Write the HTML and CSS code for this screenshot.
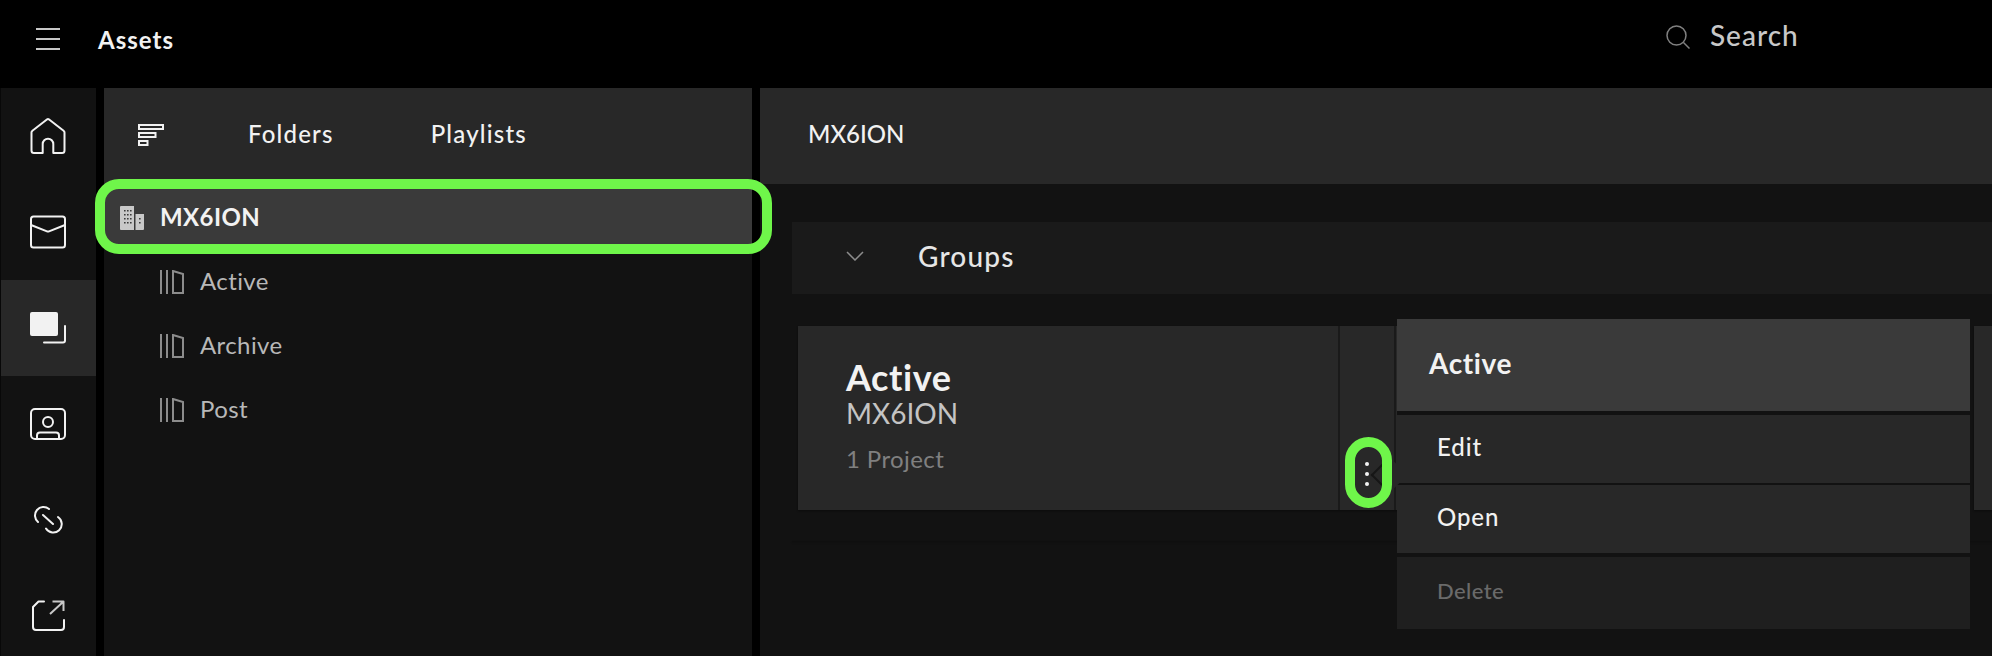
FILE: index.html
```html
<!DOCTYPE html>
<html lang="en">
<head>
    <meta charset="UTF-8">
    <title>Assets</title>
    <link rel="stylesheet" href="styles.css">
</head>
<body>
    <header class="topbar">
        <svg class="menu-icon" width="24" height="24" viewBox="0 0 24 24"><path d="M0 2h24M0 12h24M0 22h24"/></svg>
        <div class="topbar-title">Assets</div>
        <div class="search">
            <svg class="search-icon" width="24" height="24" viewBox="0 0 24 24"><circle cx="10.5" cy="10.5" r="9.5"/><path d="M17.5 17.5l6 6"/></svg>
            <span>Search</span>
        </div>
    </header>

    <div class="layout">
        <nav class="rail">
            <a class="rail-item">
                <svg viewBox="0 0 36 36"><path d="M4 35h8.700v-9a5.300 5.300 0 0 1 10.600 0v9H32a2.500 2.500 0 0 0 2.500-2.500V14.500a2 2 0 0 0-.9-1.700L18.800 1.300a1.500 1.500 0 0 0-1.600 0L2.400 12.800a2 2 0 0 0-.9 1.700v18A2.500 2.500 0 0 0 4 35z"/></svg>
            </a>
            <a class="rail-item">
                <svg viewBox="0 0 36 36"><rect x="1" y="2.500" width="34" height="31" rx="2.500"/><path d="M1 11l16 6.400q1 .4 2 0L35 11"/></svg>
            </a>
            <a class="rail-item active">
                <svg viewBox="0 0 36 36"><rect class="solid" x="0" y="2" width="28" height="24" rx="2"/><path d="M14 32.500h19a2 2 0 0 0 2-2V16"/></svg>
            </a>
            <a class="rail-item">
                <svg viewBox="0 0 36 36"><rect x="1" y="3" width="34" height="30" rx="4"/><circle cx="18" cy="16" r="5"/><path d="M7 33v-3.500a3 3 0 0 1 3-3h16a3 3 0 0 1 3 3V33"/></svg>
            </a>
            <a class="rail-item">
                <svg viewBox="0 0 36 36"><path d="M19 7A8.500 8.500 0 1 0 8 20M16 26.500A8.500 8.500 0 1 0 28 15M13 13l10 9"/></svg>
            </a>
            <a class="rail-item">
                <svg viewBox="0 0 36 36"><path d="M14 3.500H8.500L3 9v20a3 3 0 0 0 3 3h25a3 3 0 0 0 3-3v-7"/><path class="thin" d="M20 16L33 4M22.500 3.500H33.500V13"/></svg>
            </a>
        </nav>

        <aside class="sidebar">
            <div class="sidebar-tabs">
                <svg class="sort-icon" width="26" height="22" viewBox="0 0 26 22"><rect x="1" y="1" width="24" height="4"/><rect x="1" y="9" width="16.500" height="4"/><rect x="1" y="17" width="8.500" height="4"/></svg>
                <span class="tab">Folders</span>
                <span class="tab">Playlists</span>
            </div>
            <div class="tree-row root">
                <svg class="building-icon" width="24" height="24" viewBox="0 0 24 24">
                    <path class="fill" d="M1 0h13v24H1a1 1 0 0 1-1-1V1a1 1 0 0 1 1-1zM15.500 8H24v15a1 1 0 0 1-1 1h-7.500z"/>
                    <path class="holes" d="M4 4h1.600v1.600H4zM7 4h1.600v1.600H7zM10 4h1.600v1.600H10zM4 8h1.600v1.600H4zM7 8h1.600v1.600H7zM10 8h1.600v1.600H10zM4 12h1.600v1.600H4zM7 12h1.600v1.600H7zM10 12h1.600v1.600H10zM4 16h1.600v1.600H4zM7 16h1.600v1.600H7zM10 16h1.600v1.600H10zM19 12h1.600v1.600H19zM19 16h1.600v1.600H19z"/>
                </svg>
                <span>MX6ION</span>
                <div class="ring ring-row"></div>
            </div>
            <div class="tree-row">
                <svg class="folder-icon" width="24" height="24" viewBox="0 0 24 24"><path d="M1 0v24M7 0v24M13 1l10 3v19H13z"/></svg>
                <span>Active</span>
            </div>
            <div class="tree-row">
                <svg class="folder-icon" width="24" height="24" viewBox="0 0 24 24"><path d="M1 0v24M7 0v24M13 1l10 3v19H13z"/></svg>
                <span>Archive</span>
            </div>
            <div class="tree-row">
                <svg class="folder-icon" width="24" height="24" viewBox="0 0 24 24"><path d="M1 0v24M7 0v24M13 1l10 3v19H13z"/></svg>
                <span>Post</span>
            </div>
        </aside>

        <main class="main">
            <div class="main-header">MX6ION</div>
            <div class="main-body">
                <div class="group-bar">
                    <svg class="chevron" width="18" height="10" viewBox="0 0 18 10"><path d="M1 1l8 8 8-8"/></svg>
                    <span>Groups</span>
                </div>
                <div class="cards">
                    <div class="card">
                        <div class="card-info">
                            <div class="card-title">Active</div>
                            <div class="card-sub">MX6ION</div>
                            <div class="card-count">1 Project</div>
                        </div>
                        <div class="card-actions">
                            <div class="kebab"><i></i><i></i><i></i></div>
                            <div class="ring ring-kebab"></div>
                        </div>
                    </div>
                    <div class="card"></div>
                </div>
                <div class="cards-rule"></div>
            </div>
            <div class="context-menu">
                <div class="menu-title">Active</div>
                <div class="menu-item">Edit</div>
                <div class="menu-item">Open</div>
                <div class="menu-item disabled">Delete</div>
            </div>
        </main>
    </div>
</body>
</html>
```

FILE: styles.css
```css
/* Reset */
* {
    margin: 0;
    padding: 0;
    box-sizing: border-box;
}

body {
    background: #000;
    color: #f2f2f2;
    font-family: 'Lato', 'Liberation Sans', sans-serif;
    height: 656px;
    overflow: hidden;
}

svg {
    display: block;
    fill: none;
    flex-shrink: 0;
}

/* Top bar */
.topbar {
    height: 88px;
    display: flex;
    align-items: center;
    padding-left: 36px;
}

.menu-icon {
    stroke: #c8c8c8;
    stroke-width: 2;
    margin-top: -10px;
}

.topbar-title {
    margin: -10px 0 0 38px;
    font-size: 24px;
    font-weight: 700;
    letter-spacing: 1px;
}

.search {
    display: flex;
    align-items: center;
    gap: 20px;
    margin: -18px 0 0 1492px;
    font-size: 28px;
    font-weight: 500;
    letter-spacing: 1px;
    color: #c8c8c8;
}

.search-icon {
    stroke: #808080;
    stroke-width: 1.5;
    margin-top: 4px;
}

/* Page columns */
.layout {
    display: grid;
    grid-template-columns: 96px 648px 1fr;
    gap: 8px;
    height: 568px;
}

/* Icon rail */
.rail {
    background: #121212;
    border-left: 1px solid #080808;
    overflow: hidden;
}

.rail-item {
    height: 96px;
    display: flex;
    align-items: center;
    justify-content: center;
    padding-right: 1px;
}

.rail-item.active {
    background: #282828;
}

.rail-item svg {
    width: 36px;
    height: 36px;
    stroke: #f2f2f2;
    stroke-width: 2;
    stroke-linecap: round;
    stroke-linejoin: round;
}

.rail-item .solid {
    fill: #f2f2f2;
    stroke: none;
}

.rail-item .thin {
    stroke: #c8c8c8;
    stroke-linecap: butt;
}

/* Sidebar */
.sidebar {
    background: #121212;
}

.sidebar-tabs {
    height: 96px;
    background: #282828;
    display: flex;
    align-items: center;
    padding: 0 0 5px 34px;
    font-size: 24px;
    font-weight: 500;
    letter-spacing: 1.2px;
}

.sort-icon {
    stroke: #f2f2f2;
    stroke-width: 2;
    margin-top: 3px;
}

.tab {
    margin-left: 84px;
}

.tab + .tab {
    margin-left: 97px;
}

.tree-row {
    position: relative;
    height: 64px;
    display: flex;
    align-items: center;
    gap: 16px;
    padding-left: 56px;
    font-size: 24px;
    letter-spacing: .4px;
    color: #b8b8b8;
}

.tree-row.root {
    background: #3a3a3a;
    padding-left: 16px;
    font-weight: 700;
    color: #f2f2f2;
}

.folder-icon,
.building-icon {
    margin-top: 4px;
}

.folder-icon {
    stroke: #8c8c8c;
    stroke-width: 2;
}

.building-icon .fill {
    fill: #c8c8c8;
}

.building-icon .holes {
    fill: #3a3a3a;
}

/* Green callouts laid over the screenshot */
.ring {
    position: absolute;
    z-index: 2;
    border: 10px solid #6ff64a;
    pointer-events: none;
}

.ring-row {
    left: -9px;
    right: -20px;
    top: -5px;
    bottom: -6px;
    border-radius: 24px;
}

.ring-kebab {
    left: 5px;
    width: 47px;
    bottom: 2px;
    height: 71px;
    border-radius: 24px;
}

/* Main area */
.main {
    position: relative;
    background: #121212;
    overflow: hidden;
}

.main-header {
    height: 96px;
    background: #282828;
    display: flex;
    align-items: center;
    padding: 0 0 5px 48px;
    font-size: 24px;
    font-weight: 500;
}

.main-body {
    padding: 38px 0 0 32px;
}

.group-bar {
    height: 72px;
    background: #1a1a1a;
    display: flex;
    align-items: center;
    gap: 54px;
    padding: 0 0 4px 54px;
    font-size: 28px;
    font-weight: 500;
    letter-spacing: 1.2px;
    color: #e6e6e6;
}

.chevron {
    stroke: #8c8c8c;
    stroke-width: 1.500;
}

.cards {
    display: flex;
    gap: 8px;
    margin: 32px 0 0 6px;
}

.card {
    width: 1168px;
    height: 184px;
    flex-shrink: 0;
    background: #282828;
    display: flex;
    box-shadow: 0 1px 2px rgba(0, 0, 0, 0.4);
}

.card-info {
    width: 540px;
    padding: 31px 0 0 48px;
}

.card-title {
    font-size: 36px;
    font-weight: 700;
    letter-spacing: .6px;
    line-height: 40px;
}

.card-sub {
    font-size: 28px;
    line-height: 32px;
    color: #c4c4c4;
}

.card-count {
    margin-top: 14px;
    font-size: 24px;
    letter-spacing: .4px;
    line-height: 32px;
    color: #808080;
}

.card-actions {
    position: relative;
    width: 58px;
    border-left: 2px solid #1a1a1a;
    border-right: 2px solid #1a1a1a;
}

.kebab {
    position: absolute;
    left: 25px;
    top: 136px;
    display: flex;
    flex-direction: column;
    gap: 6px;
}

.kebab i {
    width: 4px;
    height: 4px;
    border-radius: 50%;
    background: #f2f2f2;
}

.cards-rule {
    height: 1px;
    margin-top: 31px;
    background: #0f0f0f;
    box-shadow: 0 1px 2px rgba(0, 0, 0, 0.2);
}

/* Context menu */
.context-menu {
    position: absolute;
    z-index: 1;
    left: 637px;
    top: 231px;
    width: 573px;
    display: flex;
    flex-direction: column;
    background: #121212;
}

/* Small pointer back to the dots */
.context-menu::before {
    content: '';
    position: absolute;
    z-index: -1;
    left: -21px;
    top: 143px;
    width: 24px;
    height: 24px;
    background: #282828;
    border-left: 2px solid #161616;
    border-bottom: 2px solid #161616;
    transform: rotate(45deg);
}

.menu-title {
    height: 92px;
    background: #3a3a3a;
    padding: 27px 0 0 32px;
    font-size: 28px;
    font-weight: 700;
    letter-spacing: .6px;
}

.menu-item {
    height: 68px;
    margin-top: 2px;
    background: #282828;
    display: flex;
    align-items: center;
    padding: 0 0 5px 40px;
    font-size: 24px;
    font-weight: 500;
    letter-spacing: .9px;
}

.menu-title + .menu-item {
    margin-top: 4px;
}

.menu-item.disabled {
    height: 72px;
    margin-top: 4px;
    background: #1f1f1f;
    font-size: 22px;
    letter-spacing: .4px;
    color: #6a6a6a;
}
```
